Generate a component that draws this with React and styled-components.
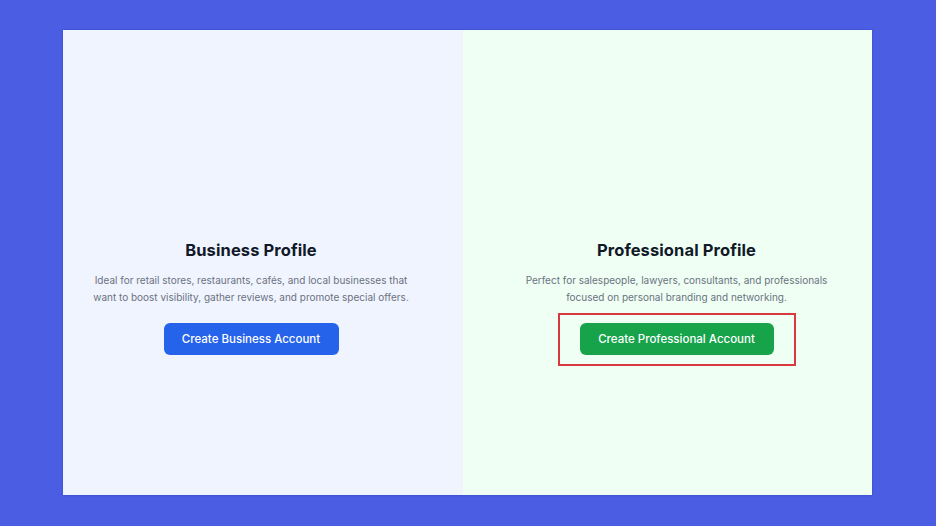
import React from 'react'
import styled, { createGlobalStyle } from 'styled-components'

const Global = createGlobalStyle`
  html, body { margin: 0; padding: 0; }
  body {
    background: #4a5de3;
    font-family: Inter, "Noto Sans", sans-serif;
  }
`

export default function App() {
  return (
    <>
      <Global />
      <Page>
        <Card>
          <Panel $bg="#f0f4ff" $padLeft={0} $padRight={24}>
            <Title>Business Profile</Title>
            <Desc>
              Ideal for retail stores, restaurants, cafés, and local businesses that
              <br />
              want to boost visibility, gather reviews, and promote special offers.
            </Desc>
            <ButtonWrap>
              <Button $color="#2563eb" $width={175}>Create Business Account</Button>
            </ButtonWrap>
          </Panel>
          <Panel $bg="#effff4" $padLeft={18} $padRight={0}>
            <Title>Professional Profile</Title>
            <Desc>
              Perfect for salespeople, lawyers, consultants, and professionals
              <br />
              focused on personal branding and networking.
            </Desc>
            <ButtonWrap $highlight>
              <Button $color="#16a34a" $width={194}>Create Professional Account</Button>
            </ButtonWrap>
          </Panel>
        </Card>
      </Page>
    </>
  )
}

const Page = styled.div`
width: 936px;
height: 526px;
padding: 30px 0 0 63px;
box-sizing: border-box;
`
const Card = styled.div`
width: 809px;
height: 465px;
display: grid;
grid-template-columns: 400px 409px;
box-shadow: 0 0 2px rgba(20, 30, 120, 0.35);
`
const Panel = styled.div`
background: ${p => p.$bg};
display: flex;
flex-direction: column;
align-items: center;
padding: 209px ${p => p.$padRight}px 0 ${p => p.$padLeft}px;
`
const Title = styled.h2`
margin: 0;
font-size: 16.5px;
font-weight: 700;
color: #111827;
letter-spacing: 0.1px;
line-height: 22px;
`
const Desc = styled.p`
margin: 11px 0 0;
font-size: 10px;
line-height: 17px;
color: #6b7280;
text-align: center;
`
const ButtonWrap = styled.div`
margin-top: ${p => (p.$highlight ? '7px' : '17px')};
padding: ${p => (p.$highlight ? '8px 20px 9px' : '0')};
border: ${p => (p.$highlight ? '2px solid #d9393e' : 'none')};
`
const Button = styled.button`
display: block;
width: ${p => p.$width}px;
height: 32px;
border: none;
border-radius: 6px;
background: ${p => p.$color};
color: #fff;
font-family: Inter, "Noto Sans", sans-serif;
font-size: 11.5px;
font-weight: 500;
cursor: pointer;
`
